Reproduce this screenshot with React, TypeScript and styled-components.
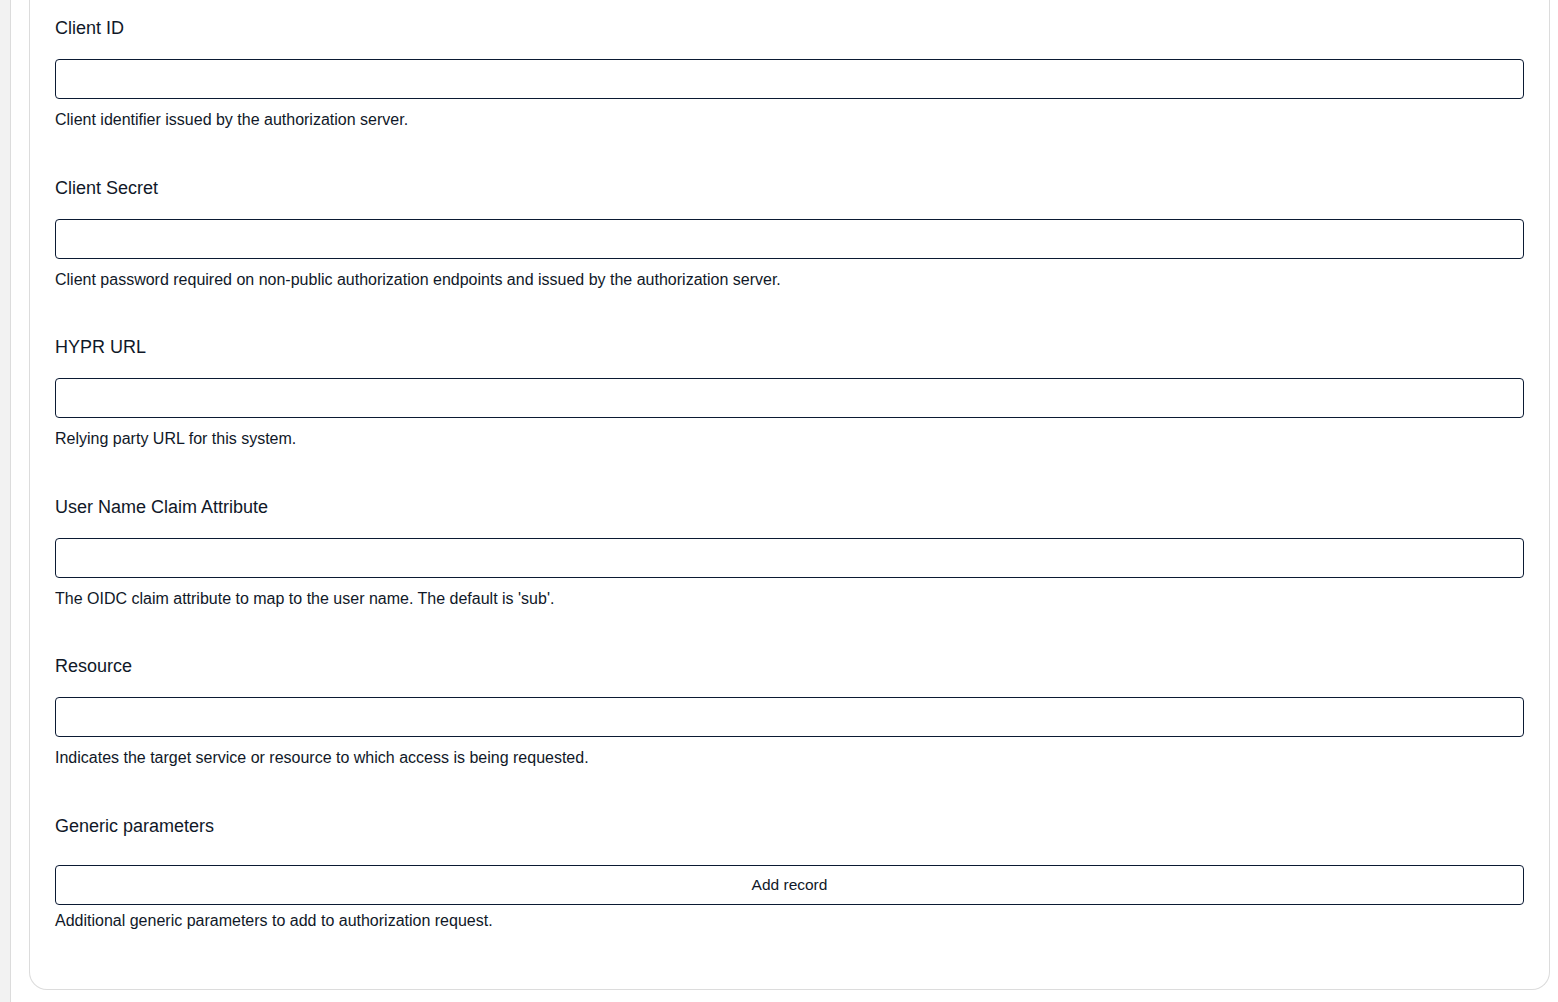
import React from "react";
import styled, { createGlobalStyle } from "styled-components";

const GlobalStyle = createGlobalStyle`
  html, body {
    margin: 0;
    padding: 0;
    background: #ffffff;
    font-family: "Liberation Sans", Arial, sans-serif;
    color: #101828;
  }
`;

type FieldDef = {
  label: string;
  help: string;
  kind?: "input" | "records";
};

const fields: FieldDef[] = [
  { label: "Client ID", help: "Client identifier issued by the authorization server." },
  {
    label: "Client Secret",
    help: "Client password required on non-public authorization endpoints and issued by the authorization server.",
  },
  { label: "HYPR URL", help: "Relying party URL for this system." },
  {
    label: "User Name Claim Attribute",
    help: "The OIDC claim attribute to map to the user name. The default is 'sub'.",
  },
  {
    label: "Resource",
    help: "Indicates the target service or resource to which access is being requested.",
  },
  {
    label: "Generic parameters",
    help: "Additional generic parameters to add to authorization request.",
    kind: "records",
  },
];

export default function App() {
  return (
    <>
      <GlobalStyle />
      <Page>
        <SideRail />
        <Main>
          <Card>
            {fields.map((f) => (
              <Field key={f.label}>
                <Label $tight={f.kind !== "records"}>{f.label}</Label>
                {f.kind === "records" ? (
                  <AddButton type="button">Add record</AddButton>
                ) : (
                  <TextInput type="text" aria-label={f.label} />
                )}
                <Help $close={f.kind === "records"}>{f.help}</Help>
              </Field>
            ))}
          </Card>
        </Main>
      </Page>
    </>
  );
}

const Page = styled.div`
  display: flex;
  min-height: 1002px;
`;

const SideRail = styled.div`
  width: 10px;
  flex: 0 0 10px;
  background: #f2f2f2;
  border-right: 1px solid #dcdcdc;
`;

const Main = styled.div`
  flex: 1;
  padding: 0 8px 12px 18px;
`;

const Card = styled.div`
  border: 1px solid #dcdcdc;
  border-top: none;
  border-radius: 0 0 18px 18px;
  padding: 15px 25px 58px 25px;
  display: flex;
  flex-direction: column;
  gap: 44.6px;
`;

const Field = styled.div`
  display: flex;
  flex-direction: column;
`;

const Label = styled.label<{ $tight: boolean }>`
  font-size: 18px;
  line-height: 27px;
  margin-bottom: ${(p) => (p.$tight ? "17px" : "25px")};
  color: #101828;
`;

const TextInput = styled.input`
  box-sizing: border-box;
  height: 40px;
  width: 100%;
  border: 1px solid #0b1a33;
  border-radius: 4px;
  background: #fff;
  padding: 0 12px;
  font: inherit;
  outline: none;
`;

const AddButton = styled.button`
  box-sizing: border-box;
  height: 40px;
  width: 100%;
  border: 1px solid #0b1a33;
  border-radius: 4px;
  background: #fff;
  font-family: inherit;
  font-size: 15.5px;
  color: #101828;
  cursor: pointer;
`;

const Help = styled.div<{ $close: boolean }>`
  font-size: 16px;
  line-height: 21px;
  margin-top: ${(p) => (p.$close ? "5px" : "10px")};
  color: #101828;
`;
